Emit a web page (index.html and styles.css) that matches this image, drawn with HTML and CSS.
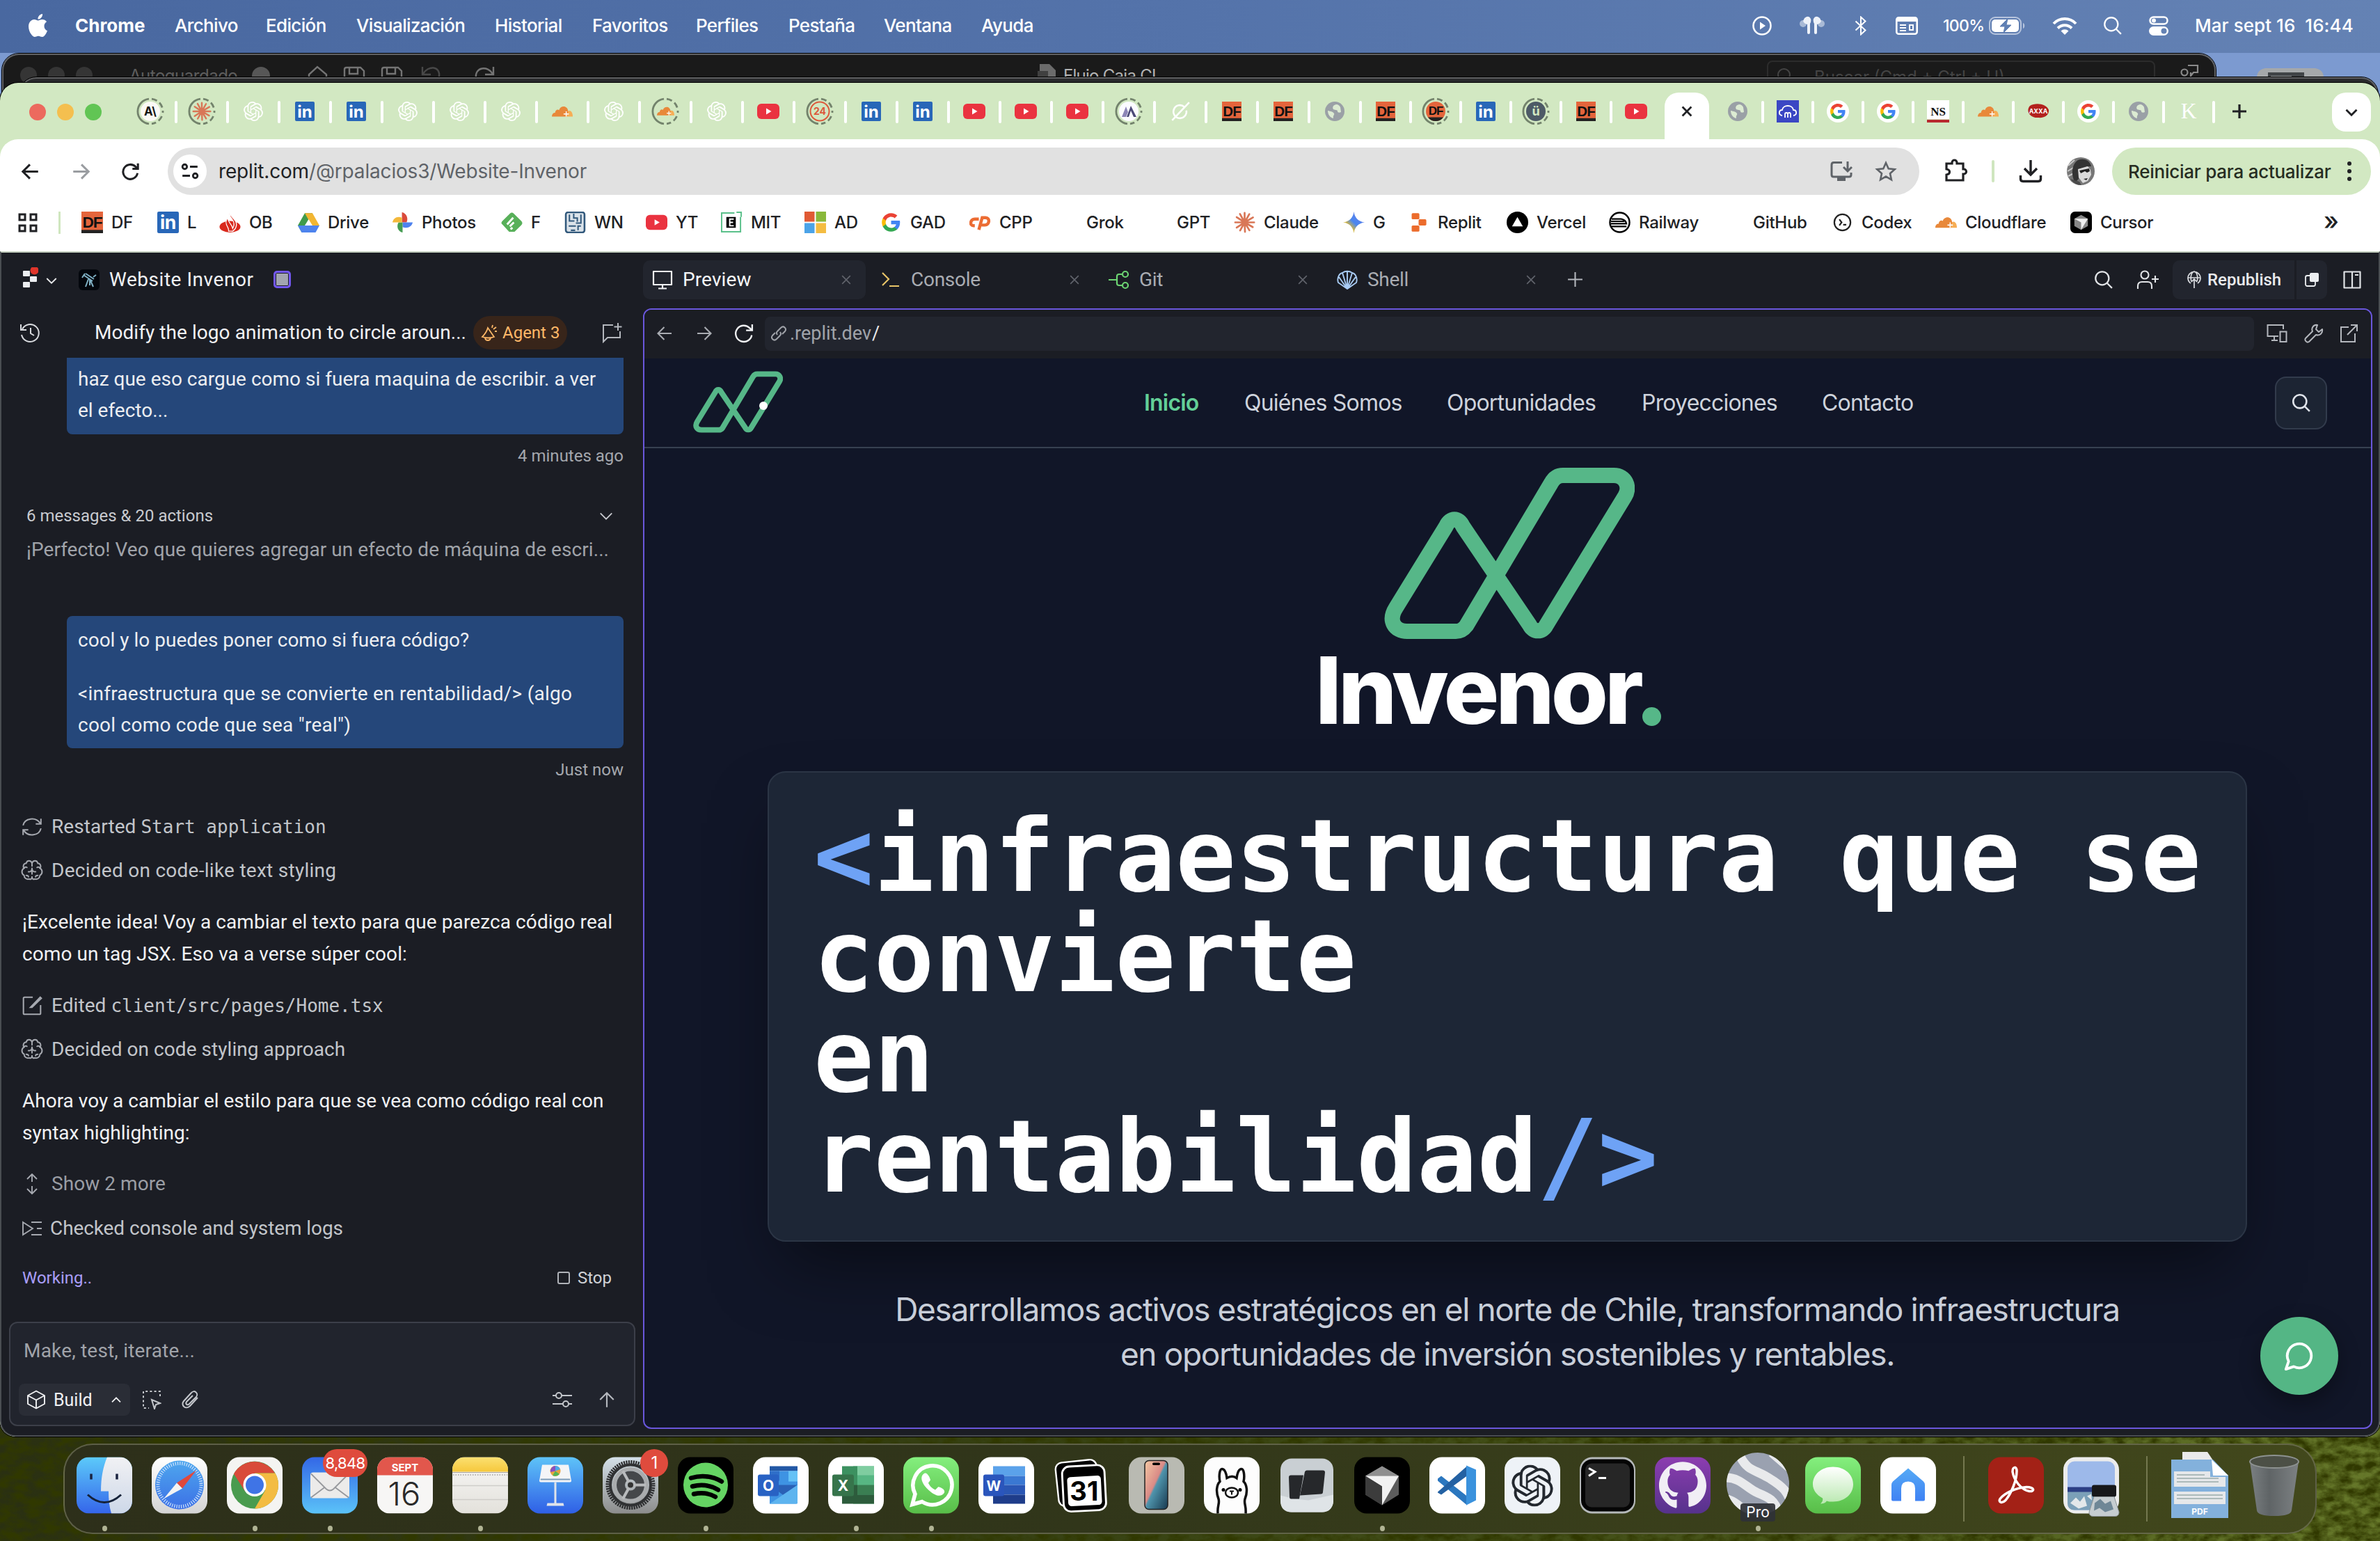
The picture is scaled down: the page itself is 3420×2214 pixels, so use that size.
FILE: index.html
```html
<!DOCTYPE html>
<html lang="es">
<head>
<meta charset="utf-8">
<title>Website Invenor - Replit</title>
<link rel="stylesheet" href="styles.css">
</head>
<body>
<svg class="defs" aria-hidden="true">
  <defs>
    <linearGradient id="gFinder" x2="0" y2="1"><stop stop-color="#5ccafa"/><stop offset="1" stop-color="#3565ea"/></linearGradient>
    <linearGradient id="gFace" x2="0" y2="1"><stop stop-color="#f1f1f4"/><stop offset="1" stop-color="#cdd8e8"/></linearGradient>
    <linearGradient id="gGray" x2="0" y2="1"><stop stop-color="#fff"/><stop offset="1" stop-color="#d4d4d4"/></linearGradient>
    <linearGradient id="gSafari" x2="0" y2="1"><stop stop-color="#4ea7ee"/><stop offset="1" stop-color="#3c70e6"/></linearGradient>
    <linearGradient id="gMail" x2="0" y2="1"><stop stop-color="#3367e6"/><stop offset="1" stop-color="#5bc3f8"/></linearGradient>
    <linearGradient id="gKey" x2="0" y2="1"><stop stop-color="#5ec3f8"/><stop offset="1" stop-color="#2f5fe6"/></linearGradient>
    <linearGradient id="gYellow" x2="0" y2="1"><stop stop-color="#fbe071"/><stop offset="1" stop-color="#f6c83c"/></linearGradient>
    <linearGradient id="gNote" x2="0" y2="1"><stop stop-color="#f8f7f6"/><stop offset="1" stop-color="#e3e1db"/></linearGradient>
    <linearGradient id="gSet" x2="0" y2="1"><stop stop-color="#d4e0e8"/><stop offset="1" stop-color="#8c8c8c"/></linearGradient>
    <linearGradient id="gGreen" x2="0" y2="1"><stop stop-color="#84ef7e"/><stop offset="1" stop-color="#58bd48"/></linearGradient>
    <linearGradient id="gBubble" x2="0" y2="1"><stop stop-color="#fff"/><stop offset="1" stop-color="#b9e8b0"/></linearGradient>
    <linearGradient id="gPurple" x2="0" y2="1"><stop stop-color="#8c3db0"/><stop offset="1" stop-color="#56328c"/></linearGradient>
    <linearGradient id="gBlue" x2="0" y2="1"><stop stop-color="#56aaf5"/><stop offset="1" stop-color="#3f82f4"/></linearGradient>
    <linearGradient id="gPhone" x2="1" y2="1"><stop stop-color="#f4c9a4"/><stop offset=".45" stop-color="#d98a86"/><stop offset=".5" stop-color="#4f94ac"/><stop offset="1" stop-color="#17384f"/></linearGradient>
    <linearGradient id="gTrash" x2="1" y2="0"><stop stop-color="#7b8082"/><stop offset=".4" stop-color="#5f6466"/><stop offset="1" stop-color="#7d8183"/></linearGradient>
    <linearGradient id="gGem" x1="0" x2="1" y1="1" y2="0"><stop stop-color="#41a55e"/><stop offset=".3" stop-color="#d9b83e"/><stop offset=".5" stop-color="#4a86ef"/><stop offset="1" stop-color="#6d7ee8"/></linearGradient>
    <clipPath id="rnd"><rect width="80" height="81" rx="18"/></clipPath>
    <clipPath id="earth"><circle cx="40" cy="39" r="45"/></clipPath>
    <filter id="grassNoise" x="0" y="0" width="100%" height="100%"><feTurbulence type="fractalNoise" baseFrequency=".05 .08" numOctaves="5" seed="11"/><feColorMatrix values="0 0 0 0 0.03  0 0 0 0 0.04  0 0 0 0 0  2.2 0 0 0 -.62"/></filter>
  </defs>
</svg>
<svg class="sprite" aria-hidden="true">
  <symbol id="apple" viewBox="0 0 24 24"><path fill="currentColor" d="M12.152 6.896c-.948 0-2.415-1.078-3.96-1.04-2.04.027-3.91 1.183-4.961 3.014-2.117 3.675-.546 9.103 1.519 12.09 1.013 1.454 2.208 3.09 3.792 3.039 1.52-.065 2.09-.987 3.935-.987 1.831 0 2.35.987 3.96.948 1.637-.026 2.676-1.48 3.676-2.948 1.156-1.688 1.636-3.325 1.662-3.415-.039-.013-3.182-1.221-3.22-4.857-.026-3.04 2.48-4.494 2.597-4.559-1.429-2.09-3.623-2.324-4.39-2.376-2-.156-3.675 1.09-4.61 1.09zM15.53 3.83c.843-1.012 1.4-2.427 1.245-3.83-1.207.052-2.662.805-3.532 1.818-.78.896-1.454 2.338-1.273 3.714 1.338.104 2.715-.688 3.559-1.701"/></symbol>
  <symbol id="gpt" viewBox="0 0 24 24"><path fill="currentColor" d="M22.2819 9.8211a5.9847 5.9847 0 0 0-.5157-4.9108 6.0462 6.0462 0 0 0-6.5098-2.9A6.0651 6.0651 0 0 0 4.9807 4.1818a5.9847 5.9847 0 0 0-3.9977 2.9 6.0462 6.0462 0 0 0 .7427 7.0966 5.98 5.98 0 0 0 .511 4.9107 6.051 6.051 0 0 0 6.5146 2.9001A5.9847 5.9847 0 0 0 13.2599 24a6.0557 6.0557 0 0 0 5.7718-4.2058 5.9894 5.9894 0 0 0 3.9977-2.9001 6.0557 6.0557 0 0 0-.7475-7.0729zm-9.022 12.6081a4.4755 4.4755 0 0 1-2.8764-1.0408l.1419-.0804 4.7783-2.7582a.7948.7948 0 0 0 .3927-.6813v-6.7369l2.02 1.1686a.071.071 0 0 1 .038.052v5.5826a4.504 4.504 0 0 1-4.4945 4.4944zm-9.6607-4.1254a4.4708 4.4708 0 0 1-.5346-3.0137l.142.0852 4.783 2.7582a.7712.7712 0 0 0 .7806 0l5.8428-3.3685v2.3324a.0804.0804 0 0 1-.0332.0615L9.74 19.9502a4.4992 4.4992 0 0 1-6.1408-1.6464zM2.3408 7.8956a4.485 4.485 0 0 1 2.3655-1.9728V11.6a.7664.7664 0 0 0 .3879.6765l5.8144 3.3543-2.0201 1.1685a.0757.0757 0 0 1-.071 0l-4.8303-2.7865A4.504 4.504 0 0 1 2.3408 7.872zm16.5963 3.8558L13.1038 8.364 15.1192 7.2a.0757.0757 0 0 1 .071 0l4.8303 2.7913a4.4944 4.4944 0 0 1-.6765 8.1042v-5.6772a.79.79 0 0 0-.407-.667zm2.0107-3.0231l-.142-.0852-4.7735-2.7818a.7759.7759 0 0 0-.7854 0L9.409 9.2297V6.8974a.0662.0662 0 0 1 .0284-.0615l4.8303-2.7866a4.4992 4.4992 0 0 1 6.6802 4.66zM8.3065 12.863l-2.02-1.1638a.0804.0804 0 0 1-.038-.0567V6.0742a4.4992 4.4992 0 0 1 7.3757-3.4537l-.142.0805L8.704 5.459a.7948.7948 0 0 0-.3927.6813zm1.0976-2.3654l2.602-1.4998 2.6069 1.4998v2.9994l-2.5974 1.4997-2.6067-1.4997Z"/></symbol>
  <symbol id="github" viewBox="0 0 24 24"><path fill="currentColor" d="M12 .297c-6.63 0-12 5.373-12 12 0 5.303 3.438 9.8 8.205 11.385.6.113.82-.258.82-.577v-3.65c-3.338.724-4.042-1.61-4.042-1.61-.56-1.4-1.35-1.77-1.35-1.77-1.087-.744.084-.729.084-.729 1.205.084 1.838 1.236 1.838 1.236 1.07 1.835 2.809 1.305 3.495.998.108-.776.417-1.305.76-1.605-2.665-.3-5.466-1.332-5.466-5.93 0-1.31.465-2.38 1.235-3.22-.135-.303-.54-1.523.105-3.176 0 0 1.005-.322 3.3 1.23.96-.267 1.98-.399 3-.405 1.02.006 2.04.138 3 .405 2.28-1.552 3.285-1.23 3.285-1.23.645 1.653.24 2.873.12 3.176.765.84 1.23 1.91 1.23 3.22 0 4.61-2.805 5.625-5.475 5.92.42.36.81 1.096.81 2.22v4.3c0 .315.21.69.825.57C20.565 22.092 24 17.592 24 12.297c0-6.627-5.373-12-12-12"/></symbol>
  <symbol id="google" viewBox="0 0 24 24"><path fill="#4285F4" d="M22.56 12.25c0-.78-.07-1.53-.2-2.25H12v4.26h5.92c-.26 1.37-1.04 2.53-2.21 3.31v2.77h3.57c2.08-1.92 3.28-4.74 3.28-8.09z"/><path fill="#34A853" d="M12 23c2.97 0 5.46-.98 7.28-2.66l-3.57-2.77c-.98.66-2.23 1.06-3.71 1.06-2.86 0-5.29-1.93-6.16-4.53H2.18v2.84C3.99 20.53 7.7 23 12 23z"/><path fill="#FBBC05" d="M5.84 14.09c-.22-.66-.35-1.36-.35-2.09s.13-1.43.35-2.09V7.07H2.18C1.43 8.55 1 10.22 1 12s.43 3.45 1.18 4.93l3.66-2.84z"/><path fill="#EA4335" d="M12 5.38c1.62 0 3.06.56 4.21 1.64l3.15-3.15C17.45 2.09 14.97 1 12 1 7.7 1 3.99 3.47 2.18 7.07l3.66 2.84c.87-2.6 3.3-4.53 6.16-4.53z"/></symbol>
  <symbol id="googleDot" viewBox="0 0 32 32"><circle cx="16" cy="16" r="16" fill="#fff"/><use href="#google" x="4" y="4" width="24" height="24"/></symbol>
  <symbol id="claude" viewBox="0 0 24 24"><g stroke="#d97757" stroke-width="2.1" stroke-linecap="round"><path d="M12 12V1.500M12 12l5.200-9.200M12 12l9.300-5.500M12 12h10.600M12 12l9 5.200M12 12l5.300 8.800M12 12l.4 10.500M12 12l-5 9M12 12l-8.800 5.800M12 12H1.500M12 12L3.200 6.200M12 12L6.800 2.600"/></g></symbol>
  <symbol id="claudeDash" viewBox="0 0 40 40"><use href="#ring"/><use href="#claude" x="6" y="6" width="28" height="28"/></symbol>
  <symbol id="ring" viewBox="0 0 40 40"><path d="M18 37.9A18 18 0 0 1 18 2.1" fill="none" stroke="#73836c" stroke-width="2.8"/><path d="M22 2.1A18 18 0 0 1 37.9 22M36.5 27A18 18 0 0 1 22 37.9" fill="none" stroke="#73836c" stroke-width="2.8" stroke-dasharray="8 4.5"/></symbol>
  <symbol id="anthropic" viewBox="0 0 40 40"><use href="#ring"/><circle cx="20" cy="20" r="14" fill="#faf9f5"/><text x="20" y="26" text-anchor="middle" class="t-bold" font-size="17" fill="#141413">A\</text></symbol>
  <symbol id="in" viewBox="0 0 28 28"><rect width="28" height="28" rx="2" fill="#2867b8"/><text x="14" y="23" text-anchor="middle" class="t-bold" font-size="24" fill="#fff">in</text></symbol>
  <symbol id="cloud" viewBox="0 0 32 24"><path fill="#f6ad55" d="M22 20c0-5 2-9 5-9 3 0 5 4 5 9z"/><path fill="#e8883a" d="M0 20c0-4 2-6 5-6 0-4 4-6 6-4 2-7 13-8 14 2l-2 8z"/><path stroke="#fff" stroke-width="1.600" d="M22 12v8M18 16h8"/></symbol>
  <symbol id="cloudDash" viewBox="0 0 40 40"><use href="#ring"/><use href="#cloud" x="8" y="10" width="25" height="19"/></symbol>
  <symbol id="yt" viewBox="0 0 32 24"><rect y="1" width="32" height="22" rx="6" fill="#ea3340"/><path fill="#fff" d="M13 7.500v9l7.500-4.500z"/></symbol>
  <symbol id="n24" viewBox="0 0 40 40"><use href="#ring"/><circle cx="20" cy="20" r="13.500" fill="none" stroke="#dc5a3c" stroke-width="2"/><text x="20" y="25" text-anchor="middle" class="t-bold" font-size="14" fill="#dc5a3c">24</text></symbol>
  <symbol id="mount" viewBox="0 0 40 40"><use href="#ring"/><circle cx="20" cy="20" r="14" fill="#fbfbff"/><path d="M10 28l6-15 3 8-3 7z" fill="#8d86b8"/><path d="M17 28l6-16 8 16h-4l-4-9-3 9z" fill="#4c4a78"/></symbol>
  <symbol id="grok" viewBox="0 0 24 24"><path d="M17 6.500a8 8 0 1 0 2.500 4.500M2 23L23 1" fill="none" stroke="#fff" stroke-width="2.200"/></symbol>
  <symbol id="df" viewBox="0 0 30 30"><rect width="30" height="30" fill="#e4653c"/><rect y="25.500" width="30" height="4.500" fill="#222"/><text x="15" y="22.500" text-anchor="middle" class="t-df" font-size="22" fill="#111">DF</text></symbol>
  <symbol id="dfDash" viewBox="0 0 40 40"><use href="#ring"/><circle cx="20" cy="20" r="14" fill="#e4653c"/><text x="20" y="25" text-anchor="middle" class="t-df" font-size="17" fill="#111">DF</text><path d="M9 28.500h22q-4 5.500-11 5.500T9 28.500z" fill="#222"/></symbol>
  <symbol id="globe" viewBox="0 0 28 28"><circle cx="14" cy="14" r="14" fill="#9aa0a6"/><path fill="#dcebd2" d="M16 4c-4 1-6 4-4 7 2 2 6 0 6 3 0 2 3 2 5 1l-1-7c-1-2-3-4-6-4zM4 13c4 1 7 1 9 4 1 2-2 3-1 7-5-1-8-6-8-11z"/></symbol>
  <symbol id="uDash" viewBox="0 0 40 40"><use href="#ring"/><circle cx="20" cy="20" r="14" fill="#4d5a66"/><text x="20" y="26" text-anchor="middle" class="t-bold" font-size="18" fill="#d2e8c2">ü</text></symbol>
  <symbol id="pod" viewBox="0 0 32 32"><rect width="32" height="32" fill="#3b47c4"/><path d="M8 22c-6-1-5-8 0-8 1-8 15-8 16 0 5 0 6 7 0 8M12 25v-5q0-2 2-2t2 2v5M16 20q0-2 2-2t2 2v5" fill="none" stroke="#fff" stroke-width="1.800"/></symbol>
  <symbol id="ns" viewBox="0 0 32 32"><rect width="32" height="27" fill="#fff"/><rect y="28" width="32" height="4" fill="#b8292f"/><text x="16" y="22" text-anchor="middle" class="t-serif" font-size="17" fill="#111">NS</text></symbol>
  <symbol id="axxa" viewBox="0 0 32 24"><path fill="#b3211e" d="M4 4c8-5 24-3 27 6 1 8-8 12-15 11C5 22-3 12 4 4z"/><text x="16" y="15" text-anchor="middle" class="t-bold" font-size="9" fill="#fff">AXXA</text></symbol>
  <symbol id="kk" viewBox="0 0 28 32"><text x="14" y="27" text-anchor="middle" class="t-serif-r" font-size="36" fill="#fff">K</text></symbol>
  <symbol id="x" viewBox="0 0 24 24"><path d="M5 5l14 14M19 5L5 19" fill="none" stroke="currentColor" stroke-width="var(--w,2)"/></symbol>
  <symbol id="plus" viewBox="0 0 24 24"><path d="M12 2v20M2 12h20" fill="none" stroke="currentColor" stroke-width="var(--w,2)"/></symbol>
  <symbol id="back" viewBox="0 0 24 24"><path d="M22 12H3M11.500 3L2.500 12l9 9" fill="none" stroke="currentColor" stroke-width="var(--w,2)"/></symbol>
  <symbol id="fwd" viewBox="0 0 24 24"><path d="M2 12h19M12.500 3l9 9-9 9" fill="none" stroke="currentColor" stroke-width="var(--w,2)"/></symbol>
  <symbol id="up" viewBox="0 0 24 24"><path d="M12 22V3M3 12l9-9 9 9" fill="none" stroke="currentColor" stroke-width="var(--w,2)"/></symbol>
  <symbol id="reload" viewBox="0 0 24 24"><path d="M21 14a9.300 9.300 0 1 1-2.500-8.200L21.500 8.500M21.500 1.500v7h-7" fill="none" stroke="currentColor" stroke-width="var(--w,2)"/></symbol>
  <symbol id="down" viewBox="0 0 24 24"><path d="M3 8l9 9 9-9" fill="none" stroke="currentColor" stroke-width="var(--w,2)"/></symbol>
  <symbol id="upc" viewBox="0 0 24 24"><path d="M3 17l9-9 9 9" fill="none" stroke="currentColor" stroke-width="var(--w,2)"/></symbol>
  <symbol id="search" viewBox="0 0 24 24"><circle cx="10.500" cy="10.500" r="8.500" fill="none" stroke="currentColor" stroke-width="var(--w,2)"/><path d="M16.500 16.500L23 23" stroke="currentColor" stroke-width="var(--w,2)"/></symbol>
  <symbol id="brain" viewBox="0 0 30 30"><path d="M15 5C14 1 8 0 7 5 3 5 2 10 4 12c-4 2-4 8 0 10 0 4 4 6 7 5 2 1 4 0 4-3M15 5c1-4 7-5 8 0 4 0 5 5 3 7 4 2 4 8 0 10 0 4-4 6-7 5-2 1-4 0-4-3M15 5v4M15 12v8M10 17c3 0 5-2 5-5 0 3 2 5 5 5M4 12c1-2 3-2 4-1M26 12c-1-2-3-2-4-1M7 22c2 0 3 1 3 2M23 22c-2 0-3 1-3 2" fill="none" stroke="currentColor" stroke-width="1.900" stroke-linecap="round"/></symbol>
  <symbol id="mark" viewBox="0 0 360 246"><path fill="none" stroke="#56b788" stroke-width="22" stroke-linejoin="round" d="M33 235H103Q112 235 118 227L240 22Q246 11 257 11H330C347 11 354 28 346 41L233 226C228 237 214 237 209 226L113 84C107 71 95 71 89 84L17 201C5 220 15 235 33 235Z"/></symbol>
</svg>

<svg class="grass" width="3420" height="200"><rect width="3420" height="200" filter="url(#grassNoise)"/></svg>

<header class="menubar">
  <svg class="m-apple"><use href="#apple"/></svg>
  <nav class="menus"><b>Chrome</b><span>Archivo</span><span>Edición</span><span>Visualización</span><span>Historial</span><span>Favoritos</span><span>Perfiles</span><span>Pestaña</span><span>Ventana</span><span>Ayuda</span></nav>
  <div class="status">
    <svg viewBox="0 0 28 28" width="28" height="28"><circle cx="14" cy="14" r="12.500" fill="none" stroke="#fff" stroke-width="2.500"/><path fill="#fff" d="M11 8.500v11l8-5.500z"/></svg>
    <svg viewBox="0 0 38 28" width="38" height="28"><circle cx="6" cy="11" r="5" fill="#a9bad6"/><circle cx="32" cy="11" r="5" fill="#a9bad6"/><path fill="#eef2f9" d="M8 3q6-5 9 1 1 4-1 7v13q0 2-2 2t-2-2V12Q7 11 6 7zM30 3q-6-5-9 1-1 4 1 7v13q0 2 2 2t2-2V12q5-1 6-5z"/></svg>
    <svg viewBox="0 0 18 28" width="18" height="28"><path d="M1.500 7.500l14 13L9 26.500v-25l6.500 6L1.500 20.500" fill="none" stroke="#fff" stroke-width="2"/></svg>
    <svg viewBox="0 0 32 26" width="32" height="26"><rect x="1.300" y="1.300" width="29.400" height="23.400" rx="3" fill="none" stroke="#fff" stroke-width="2.600"/><path fill="#fff" d="M2 2h28v5H2z"/><path stroke="#fff" stroke-width="2" d="M6 12h9M6 16h9M6 20h9M20 12h5v7h-5z" fill="none"/></svg>
    <span class="pct">100%</span>
    <svg viewBox="0 0 52 26" width="52" height="26"><rect x="1" y="1" width="45" height="24" rx="8" fill="none" stroke="#b6c4dd" stroke-width="2"/><rect x="4" y="4" width="39" height="18" rx="5" fill="#fff"/><path d="M49 9c3 1 3 7 0 8z" fill="#b6c4dd"/><path fill="#5f7fb3" stroke="#5f7fb3" d="M27 3L16 14h7l-2 9 11-11h-7z"/></svg>
    <svg viewBox="0 0 36 26" width="36" height="26"><path fill="none" stroke="#fff" stroke-width="4" d="M2 10a22 22 0 0 1 32 0M8 16.500a14 14 0 0 1 20 0"/><path fill="#fff" d="M12.500 20.500a8 8 0 0 1 11 0L18 26z"/></svg>
    <svg class="s26"><use href="#search"/></svg>
    <svg viewBox="0 0 28 28" width="28" height="28"><rect x="1.500" y="1.500" width="25" height="10" rx="5" fill="none" stroke="#fff" stroke-width="2.500"/><circle cx="7" cy="6.500" r="3" fill="#fff"/><rect y="15" width="28" height="13" rx="6.500" fill="#fff"/><circle cx="21.500" cy="21.500" r="4" fill="#6482b4"/></svg>
    <span class="clock">Mar sept 16&nbsp; 16:44</span>
  </div>
</header>

<svg class="drive" viewBox="0 0 96 40" width="96" height="40"><path fill="#a5a8aa" d="M0 40V14Q0 2 12 0h72q12 2 12 14v26z"/><path fill="#404447" d="M16 6h52v34H16z"/><path stroke="#9b9fa1" stroke-width="2" d="M20 12h30M20 17h24M20 22h28M54 30l4-12 5 12"/></svg>

<section class="win excel">
  <div class="xlights"><i></i><i></i><i></i></div>
  <span class="xauto">Autoguardado</span><i class="xtoggle"></i>
  <svg class="xicons" viewBox="0 0 330 40" width="330" height="40"><g fill="none" stroke="#747474" stroke-width="2.400"><path d="M3 34V15L15 4l13 11v19"/><path d="M54 34V8q0-3 3-3h20l5 5v24M61 5v9h12V5M60 34V21h16v13M108 34V8q0-3 3-3h20l5 5v24M115 5v9h12V5M114 34V21h14"/><path stroke="#484848" d="M166 4v11h12M167 14c7-12 25-12 23 4q-2 4-7 9"/><path d="M209 22l5 5 5-5M268 4v11h-12M267 14c-7-12-26-10-24 6"/></g><g fill="#747474"><circle cx="303" cy="24" r="2.500"/><circle cx="313" cy="24" r="2.500"/><circle cx="323" cy="24" r="2.500"/></g></svg>
  <div class="xtitle"><svg viewBox="0 0 26 34" width="26" height="34"><path fill="#6b6b6b" d="M3 0h14l9 9v25H3z"/><path fill="#404040" d="M0 10h15v14H0z"/></svg><span>Flujo Caja CL</span></div>
  <div class="xsearch"><svg class="s22"><use href="#search"/></svg>Buscar (Cmd + Ctrl + U)</div>
  <svg class="xshare" viewBox="0 0 28 28" width="28" height="28"><g fill="none" stroke="#8a8a8a" stroke-width="2.200"><circle cx="7" cy="12" r="4.500"/><path d="M12 2h14v10h-6l-4 5v-5M1 24c0-7 12-7 12 0"/></g></svg>
</section>
<section class="win shadowwin"></section>

<section class="win chrome">
  <div class="tabstrip">
    <div class="lights"><i class="r"></i><i class="y"></i><i class="g"></i></div>
    <div class="tabs">
      <span><svg class="d"><use href="#anthropic"/></svg></span><span><svg class="d"><use href="#claudeDash"/></svg></span><span><svg class="w"><use href="#gpt"/></svg></span><span><svg><use href="#in"/></svg></span><span><svg><use href="#in"/></svg></span><span><svg class="w"><use href="#gpt"/></svg></span><span><svg class="w"><use href="#gpt"/></svg></span><span><svg class="w"><use href="#gpt"/></svg></span><span><svg><use href="#cloud"/></svg></span><span><svg class="w"><use href="#gpt"/></svg></span><span><svg class="d"><use href="#cloudDash"/></svg></span><span><svg class="w"><use href="#gpt"/></svg></span><span><svg class="b"><use href="#yt"/></svg></span><span><svg class="d"><use href="#n24"/></svg></span><span><svg><use href="#in"/></svg></span><span><svg><use href="#in"/></svg></span><span><svg class="b"><use href="#yt"/></svg></span><span><svg class="b"><use href="#yt"/></svg></span><span><svg class="b"><use href="#yt"/></svg></span><span><svg class="d"><use href="#mount"/></svg></span><span><svg><use href="#grok"/></svg></span><span><svg><use href="#df"/></svg></span><span><svg><use href="#df"/></svg></span><span><svg><use href="#globe"/></svg></span><span class="n"><svg><use href="#df"/></svg></span><span class="n"><svg class="d"><use href="#dfDash"/></svg></span><span class="n"><svg><use href="#in"/></svg></span><span class="n"><svg class="d"><use href="#uDash"/></svg></span><span class="n"><svg><use href="#df"/></svg></span><span class="n last"><svg class="b"><use href="#yt"/></svg></span>
      <span class="active"><svg><use href="#x"/></svg></span>
      <span class="n"><svg><use href="#globe"/></svg></span><span class="n"><svg class="b"><use href="#pod"/></svg></span><span class="n"><svg class="b"><use href="#googleDot"/></svg></span><span class="n"><svg class="b"><use href="#googleDot"/></svg></span><span class="n"><svg class="b"><use href="#ns"/></svg></span><span class="n"><svg><use href="#cloud"/></svg></span><span class="n"><svg class="b"><use href="#axxa"/></svg></span><span class="n"><svg class="b"><use href="#googleDot"/></svg></span><span class="n"><svg><use href="#globe"/></svg></span><span class="n"><svg><use href="#kk"/></svg></span>
      <span class="newtab"><svg><use href="#plus"/></svg></span>
    </div>
    <div class="tabmenu"><svg><use href="#down"/></svg></div>
  </div>

  <div class="toolbar">
    <div class="navbtns"><svg><use href="#back"/></svg><svg class="off"><use href="#fwd"/></svg><svg><use href="#reload"/></svg></div>
    <div class="omni">
      <span class="site"><svg viewBox="0 0 24 24" width="26" height="26"><g fill="none" stroke="#202124" stroke-width="2.600"><circle cx="5" cy="6" r="3"/><circle cx="19" cy="18" r="3"/><path d="M12 6h10M2 18h10"/></g></svg></span>
      <span class="url"><b>replit.com</b>/@rpalacios3/Website-Invenor</span>
      <svg viewBox="0 0 32 30" width="32" height="30"><path fill="none" stroke="#5f6368" stroke-width="3" d="M17 2.500H5Q2 2.500 2 6v14q0 3 3 3h22q3 0 3-3v-3M25 1v13M19 9l6 6 6-6"/><path fill="#5f6368" d="M10 23h12v6H10z"/></svg>
      <svg viewBox="0 0 32 30" width="32" height="30"><path fill="none" stroke="#5f6368" stroke-width="2.600" d="M16 3l3.700 8.300 9 .9-6.700 6.100 1.900 8.900L16 22.600l-7.900 4.600L10 18.300l-6.700-6.100 9-.9z"/></svg>
    </div>
    <svg class="puz" viewBox="0 0 34 34" width="34" height="34"><path fill="none" stroke="#202124" stroke-width="3.200" d="M3 8h8V6.500a3.500 3.500 0 0 1 7 0V8h9v8h1a3.500 3.500 0 0 1 0 7h-1v9H3v-8c6-1 6-7 0-8z"/></svg>
    <i class="tsep"></i>
    <svg class="dl" viewBox="0 0 34 34" width="34" height="34"><path fill="none" stroke="#202124" stroke-width="3.400" d="M17 1v21M8 13l9 9 9-9M2.500 23v5q0 3.500 3.500 3.500h22q3.500 0 3.500-3.500v-5"/></svg>
    <svg class="ava" viewBox="0 0 40 40" width="40" height="40"><circle cx="20" cy="20" r="20" fill="#777"/><path fill="#bdbdbd" d="M2 12l9-8M1 20l10-6M2 27l8-4" stroke="#c8c8c8" stroke-width="2"/><path fill="#333" d="M12 36C6 28 6 10 16 4c10-4 18 2 19 9l-6 0-12 4v14z"/><path fill="#dadada" d="M16 17l14-4 4 5 1 7-5 9-7 3-6-8z"/><path fill="#222" d="M18 19l14-3 1 4-4 2-3-2-6 3zM24 31l6-1-2 3z"/><path fill="#4a4a4a" d="M5 31l13 4 3 5q-10 0-16-9z"/></svg>
    <div class="restart">Reiniciar para actualizar<span class="kebab"><i></i><i></i><i></i></span></div>
  </div>

  <div class="bookmarks">
    <span class="apps"><svg viewBox="0 0 28 28" width="28" height="28"><path fill="none" stroke="#202124" stroke-width="3" d="M2 2h8v8H2zM18 2h8v8h-8zM2 18h8v8H2zM18 18h8v8h-8z"/></svg><i></i></span>
    <span><svg><use href="#df"/></svg>DF</span>
    <span><svg><use href="#in"/></svg>L</span>
    <span><svg viewBox="0 0 32 32"><ellipse cx="16" cy="22.500" rx="15.500" ry="8.500" fill="#d9291c"/><path fill="#d9291c" stroke="#fff" stroke-width="1.400" d="M16 0c-2 5 0 8 3 11 3 4 4 9 1 14-1-7-8-9-7-16-5 5-3 10 0 15 1 2 1 3 1 5h6c7-5 7-13 2-18-4-4-6-6-6-11z"/></svg>OB</span>
    <span><svg viewBox="0 0 28 28"><path fill="#3f9a4c" d="M9 2h10L5 27 0 18z"/><path fill="#f2b632" d="M19 2l9 16H18L9 2z"/><path fill="#4d83ee" d="M0 18h28l-5 9H5z"/><path fill="#fff" d="M14 10l5 8H9z"/></svg>Drive</span>
    <span><svg viewBox="0 0 32 32"><path fill="#da4b3b" d="M15 1v15h7c3-7-1-14-7-15z"/><path fill="#4e82ee" d="M31 16H16v7c7 3 14-1 15-7z"/><path fill="#459c52" d="M16 31V16H10c-4 7 0 14 6 15z"/><path fill="#f3b83a" d="M1 16h14V9C8 6 2 10 1 16z"/></svg>Photos</span>
    <span><svg viewBox="0 0 32 30"><path fill="#58b05a" d="M13 2q3-3 6 0l11 11q3 3 0 6L20 29h-8L2 18q-3-2 0-5z"/><path stroke="#fff" stroke-width="3" d="M9 18L18 8M13 21l6-6M14 25l3-2"/></svg>F</span>
    <span><svg viewBox="0 0 28 30"><rect x="1" y="1" width="26" height="28" rx="3" fill="#dbe3ea" stroke="#32597c" stroke-width="2.500"/><path d="M6 4v9h7M12 3v6h5v5M22 4v12h-7M5 20h10M22 20h-4v6M8 26h6" fill="none" stroke="#32597c" stroke-width="2"/></svg>WN</span>
    <span><svg><use href="#yt"/></svg>YT</span>
    <span><svg viewBox="0 0 32 32"><path fill="#fff" stroke="#5ac08a" stroke-width="2" d="M20 2H1v28h28V8"/><path d="M23 1h7v7" fill="none" stroke="#5ac08a" stroke-width="2"/><path d="M8 8h14v16H8z" fill="#000"/><path d="M19 11h-6v10h6M13 16h5" stroke="#fff" stroke-width="2" fill="none"/></svg>MIT</span>
    <span><svg viewBox="0 0 32 32"><path fill="#e05a34" d="M0 0h15v15H0z"/><path fill="#89b83a" d="M17 0h15v15H17z"/><path fill="#4ba3e8" d="M0 17h15v15H0z"/><path fill="#f4bc41" d="M17 17h15v15H17z"/></svg>AD</span>
    <span><svg class="gg"><use href="#google"/></svg>GAD</span>
    <span><svg viewBox="0 0 32 24"><path fill="none" stroke="#ec6c33" stroke-width="4.600" d="M14 7H8c-7 0-8 10-2 10h2M14 23l5-18h5c7 0 6 11-1 11h-5"/></svg>CPP</span>
    <span><svg></svg>Grok</span>
    <span><svg></svg>GPT</span>
    <span><svg><use href="#claude"/></svg>Claude</span>
    <span><svg viewBox="0 0 28 28"><path fill="url(#gGem)" d="M14 0c1 8 6 13 14 14-8 1-13 6-14 14C13 20 8 15 0 14 8 13 13 8 14 0z"/></svg>G</span>
    <span><svg viewBox="0 0 28 28"><g fill="#ec6c2c"><rect x="5" y="2" width="10" height="8" rx="1.500"/><rect x="14" y="10" width="10" height="8" rx="1.500"/><rect x="5" y="18" width="10" height="8" rx="1.500"/></g></svg>Replit</span>
    <span><svg viewBox="0 0 32 32"><circle cx="16" cy="16" r="16"/><path fill="#fff" d="M16 8l8 14H8z"/></svg>Vercel</span>
    <span><svg viewBox="0 0 32 32"><circle cx="16" cy="16" r="14.500" fill="none" stroke="#000" stroke-width="2.500"/><path stroke="#000" stroke-width="2.200" fill="none" d="M4 11h14q7 1 8 7H3M3 14.500h20M4 22h22"/></svg>Railway</span>
    <span><svg></svg>GitHub</span>
    <span><svg viewBox="0 0 28 28"><circle cx="14" cy="14" r="10.500" fill="none" stroke="#222" stroke-width="2"/><path d="M10 10l3 4-3 4M15 17h4" fill="none" stroke="#222" stroke-width="2"/></svg>Codex</span>
    <span><svg><use href="#cloud"/></svg>Cloudflare</span>
    <span><svg viewBox="0 0 32 32"><rect width="32" height="32" rx="7"/><path fill="#888" d="M16 5l10 5.500v11L16 27 6 21.500v-11z"/><path fill="#eee" d="M6 10.500h20L16 27V16z"/></svg>Cursor</span>
    <span class="more">»</span>
  </div>

  <div class="replit">
    <aside class="side">
      <div class="top">
        <svg class="rlogo" viewBox="0 0 22 30" width="22" height="30"><g fill="#eceef1"><rect x="0" y="5" width="10" height="8" rx="1"/><rect x="10" y="13" width="10" height="8" rx="1"/><rect x="0" y="21" width="10" height="8" rx="1"/></g><circle cx="16.500" cy="4.500" r="6" fill="#e0352b"/></svg>
        <svg class="chev"><use href="#down"/></svg>
        <svg class="rapp" viewBox="0 0 30 30" width="30" height="30"><rect width="30" height="30" rx="6" fill="#04070d"/><path d="M7 8l13 9M10 6l12 8M14 14l-4 11M16 14l5 11M16 15v8M5 12l4-6M21 11l4-3" stroke="#7fb0c4" stroke-width="2" fill="none"/></svg>
        <b>Website Invenor</b><i class="chip"></i>
      </div>
      <div class="thread">
        <svg class="hist" viewBox="0 0 30 30" width="30" height="30"><g fill="none" stroke="#d8dade" stroke-width="2"><path d="M4 10a12.500 12.500 0 1 1-1 8M2 3v8h8M16 8v8l5 3"/></g></svg>
        <span class="title">Modify the logo animation to circle aroun...</span>
        <span class="agent"><svg viewBox="0 0 26 26" width="26" height="26"><path d="M3 19q6-6 8-13l9 13q-8 3-17 0zM7 21c1 4 7 4 8 0M18 2l-1 4M23 5l-4 3M24 11l-3 0" fill="none" stroke="#ffb868" stroke-width="1.800"/></svg>Agent 3</span>
        <svg class="newchat" viewBox="0 0 30 30" width="30" height="30"><path d="M16 4H2v24l6-6h18v-9M23 1v11M17.500 6.500h11" fill="none" stroke="#b4b7bd" stroke-width="2"/></svg>
      </div>
      <div class="msg first"><p>haz que eso cargue como si fuera maquina de escribir. a ver<br>el efecto...</p></div>
      <div class="time">4 minutes ago</div>
      <div class="sum"><span>6 messages &amp; 20 actions</span><svg><use href="#down"/></svg></div>
      <div class="sumtext">¡Perfecto! Veo que quieres agregar un efecto de máquina de escri...</div>
      <div class="msg second"><p>cool y lo puedes poner como si fuera código?</p><p class="wide">&lt;infraestructura que se convierte en rentabilidad/&gt; (algo<br>cool como code que sea "real")</p></div>
      <div class="time">Just now</div>
      <div class="act a1"><svg viewBox="0 0 30 26" width="32" height="28"><path d="M3 11C5 1 20-1 26 8M27 2v7h-7M27 15C25 25 10 27 4 18M3 24v-7h7" fill="none" stroke="currentColor" stroke-width="1.900"/></svg><span>Restarted <code>Start application</code></span></div>
      <div class="act a2 wide"><svg><use href="#brain"/></svg><span>Decided on code-like text styling</span></div>
      <p class="say">¡Excelente idea! Voy a cambiar el texto para que parezca código real<br>como un tag JSX. Eso va a verse súper cool:</p>
      <div class="act a3"><svg viewBox="0 0 28 28" width="30" height="30"><path d="M15 2.500H4q-1.500 0-1.500 1.500v20q0 1.500 1.500 1.500h20q1.500 0 1.500-1.500V13M12 16L25 2.500l1.500 1.500L14 16z" fill="none" stroke="currentColor" stroke-width="1.900"/></svg><span>Edited <code>client/src/pages/Home.tsx</code></span></div>
      <div class="act a2"><svg><use href="#brain"/></svg><span>Decided on code styling approach</span></div>
      <p class="say tight">Ahora voy a cambiar el estilo para que se vea como código real con<br>syntax highlighting:</p>
      <div class="act dim a4"><svg viewBox="0 0 30 30" width="30" height="30"><path d="M15 1v11M8 8l7-7 7 7M15 18v11M8 22l7 7 7-7" fill="none" stroke="currentColor" stroke-width="1.900"/></svg><span>Show 2 more</span></div>
      <div class="act a5"><svg viewBox="0 0 30 24" width="30" height="24"><path d="M2 3l14 9-14 9zM14 3h15M22 12h7M14 21h15" fill="none" stroke="currentColor" stroke-width="1.900"/></svg><span>Checked console and system logs</span></div>
      <div class="work"><span>Working..</span><span class="stop"><i></i>Stop</span></div>
      <div class="prompt">
        <span class="ph">Make, test, iterate...</span>
        <div class="ptools">
          <span class="build"><svg viewBox="0 0 28 28" width="28" height="28"><path d="M14 1.500l12 6.500v12L14 26.500 2 20V8zM2 8l12 6.500L26 8M14 14.500v12" fill="none" stroke="#f0f1f3" stroke-width="1.900" stroke-linejoin="round"/></svg>Build<svg class="bc"><use href="#upc"/></svg></span>
          <svg viewBox="0 0 28 28" width="28" height="28"><path d="M26 9V2H2v24h8" fill="none" stroke="#c4c7cc" stroke-width="2" stroke-dasharray="3 3.200"/><path d="M14 14l12 5-6 2-2 6z" fill="none" stroke="#c4c7cc" stroke-width="2"/></svg>
          <svg class="clip" viewBox="0 0 28 28" width="28" height="28"><path d="M24 11L13 23c-6 6-14-1-9-7L15 4c4-5 11 1 7 6L12 20c-3 3-6 0-4-3l9-9" fill="none" stroke="#c4c7cc" stroke-width="2"/></svg>
          <i class="grow"></i>
          <svg viewBox="0 0 28 24" width="28" height="24"><g fill="none" stroke="#c4c7cc" stroke-width="2"><circle cx="9" cy="6" r="4"/><circle cx="19" cy="18" r="4"/><path d="M0 6h5M13 6h15M0 18h15M23 18h5"/></g></svg>
          <svg class="send"><use href="#up"/></svg>
        </div>
      </div>
    </aside>

    <main class="main">
      <div class="rtabs">
        <span class="rt on"><svg viewBox="0 0 30 28" width="30" height="28"><path d="M2 2h26v19H2zM15 21v6M9 26.500h12" fill="none" stroke="#f0f1f3" stroke-width="2.200" stroke-linejoin="round"/></svg>Preview<svg class="cx"><use href="#x"/></svg></span>
        <span class="rt"><svg viewBox="0 0 30 28" width="30" height="28"><path d="M3 4l9 9-9 9M13 23h14" fill="none" stroke="#e8c468" stroke-width="2.200"/></svg>Console<svg class="cx"><use href="#x"/></svg></span>
        <span class="rt"><svg viewBox="0 0 30 28" width="30" height="28"><g fill="none" stroke="#6cd472" stroke-width="2.200"><path d="M0 14h12M19 6h-4q-3 0-3 3v10q0 3 3 3h4"/><circle cx="24" cy="6" r="4"/><circle cx="24" cy="22" r="4"/></g></svg>Git<svg class="cx"><use href="#x"/></svg></span>
        <span class="rt"><svg viewBox="0 0 30 28" width="30" height="28"><path d="M15 27L2 18C0 12 3 5 8 4c4-3 10-3 14 0 5 1 8 8 6 14zM15 27L8 4M15 27V2M15 27l7-23M15 27L3 10M15 27L27 10" fill="none" stroke="#a9ccf5" stroke-width="1.900"/></svg>Shell<svg class="cx"><use href="#x"/></svg></span>
        <svg class="radd"><use href="#plus"/></svg>
        <i class="grow"></i>
        <svg class="rs"><use href="#search"/></svg>
        <svg class="inv" viewBox="0 0 32 28" width="32" height="28"><g fill="none" stroke="#e2e4e7" stroke-width="2.100"><circle cx="12" cy="7" r="5.500"/><path d="M2 27v-4q0-6 6-6h8q6 0 6 6v4M27 8v10M22 13h10"/></g></svg>
        <span class="repub"><svg viewBox="0 0 20 26" width="20" height="26"><g fill="none" stroke="#d9dbdf" stroke-width="1.700"><path d="M5 18a9 9 0 1 1 10 0M1 10h18M6 15c-2-6 0-13 4-14 4 1 6 8 4 14M10 25V12M6 16l4-4 4 4"/></g></svg>Republish</span>
        <span class="copy"><svg viewBox="0 0 20 20" width="20" height="20"><rect x="1" y="4" width="14" height="15" rx="2.500" fill="none" stroke="#eceef1" stroke-width="1.800"/><rect x="7" y="0" width="13" height="13" rx="2" fill="#eceef1"/></svg></span>
        <svg class="lay" viewBox="0 0 26 26" width="26" height="26"><path d="M1.500 1.500h23v23h-23zM13 1.500v23M17 6h5" fill="none" stroke="#e2e4e7" stroke-width="2.200" stroke-linejoin="round"/></svg>
      </div>

      <div class="pane">
        <div class="addr">
          <svg class="ab"><use href="#back"/></svg><svg class="af"><use href="#fwd"/></svg><svg class="ar"><use href="#reload"/></svg>
          <div class="ain"><svg viewBox="0 0 24 24" width="24" height="24"><path d="M10 14c-2-3-1-4 1-6l4-4c4-4 9 1 6 5l-4 4M14 10c2 3 1 4-1 6l-4 4c-4 4-9-1-6-5l4-4" fill="none" stroke="#a0a3a9" stroke-width="2"/></svg><span>.replit.dev<b>/</b></span></div>
          <svg viewBox="0 0 30 28" width="30" height="28"><path d="M24 8V2H1.500v16H17M11 18v6M7 24h9M19.500 11.500h9V26h-9z" fill="none" stroke="#b4b7bd" stroke-width="2"/></svg>
          <svg viewBox="0 0 28 28" width="28" height="28"><path d="M19 2c-6-1-9 5-7 9L2 21c-2 3 2 7 5 5l10-10c5 2 10-2 9-8l-5 4-4-4z" fill="none" stroke="#b4b7bd" stroke-width="2" stroke-linejoin="round"/></svg>
          <svg viewBox="0 0 26 28" width="26" height="28"><path d="M13 5H2v21h20V14M11 16L24 3M16 2h9v9" fill="none" stroke="#b4b7bd" stroke-width="2"/></svg>
        </div>
        <div class="site-head">
          <div class="slogo"><svg width="129" height="89"><use href="#mark"/></svg><i></i></div>
          <nav><b>Inicio</b><span>Quiénes Somos</span><span>Oportunidades</span><span>Proyecciones</span><span>Contacto</span></nav>
          <span class="sbtn"><svg><use href="#search"/></svg></span>
        </div>
        <div class="hero">
          <svg class="biglogo"><use href="#mark"/></svg>
          <div class="word">Invenor<i></i></div>
          <h1 class="code"><em>&lt;</em>infraestructura que se<br>convierte<br>en<br>rentabilidad<em>/&gt;</em></h1>
          <p class="lead">Desarrollamos activos estratégicos en el norte de Chile, transformando infraestructura<br>en oportunidades de inversión sostenibles y rentables.</p>
          <span class="fab"><svg viewBox="0 0 24 24" width="46" height="46"><path d="M7.900 20A9 9 0 1 0 4 16.100L2 22z" fill="none" stroke="#fff" stroke-width="2" stroke-linejoin="round"/></svg></span>
        </div>
      </div>
    </main>
  </div>
</section>

<footer class="dock">
  <span class="app run"><svg viewBox="0 0 80 81"><g clip-path="url(#rnd)"><path fill="url(#gFinder)" d="M0 0h80v81H0z"/><path fill="url(#gFace)" d="M44 0h36v81H50c-3-10-4-20-4-32H35C35 30 38 14 44 0z"/></g><path d="M21 24v8M58 24v8" stroke="#1a2340" stroke-width="3.500"/><path d="M16 54q24 22 48 0" fill="none" stroke="#152238" stroke-width="3"/></svg></span>
  <span class="app"><svg viewBox="0 0 80 81"><rect width="80" height="81" rx="18" fill="url(#gGray)"/><circle cx="40" cy="40" r="35" fill="url(#gSafari)"/><circle cx="40" cy="40" r="31" fill="none" stroke="#cfe4fb" stroke-width="5" stroke-dasharray="1.200 2.046"/><path fill="#e0483c" d="M64 19L44 45l-8-8z"/><path fill="#f4f4f4" d="M17 60l19-23 8 8z"/></svg></span>
  <span class="app run"><svg viewBox="0 0 80 81"><rect width="80" height="81" rx="18" fill="#f4f4f2"/><circle cx="40" cy="40" r="34" fill="#4a9b4f"/><path fill="#d94b3a" d="M10 24a34 34 0 0 1 59-1H40L26 49z"/><path fill="#f3bc42" d="M40 23h29.500A34 34 0 0 1 40 74l15-26z"/><circle cx="40" cy="40" r="16.500" fill="#fff"/><circle cx="40" cy="40" r="13" fill="#3f74e6"/></svg></span>
  <span class="app run"><svg viewBox="0 0 80 81"><rect width="80" height="81" rx="18" fill="url(#gMail)"/><rect x="12" y="22" width="56" height="37" rx="4" fill="#ecebea"/><path d="M13 24l22 22q5 4 10 0l22-22M13 58l20-15M67 58L47 43" fill="none" stroke="#96989c" stroke-width="1.800"/></svg><i class="badge wide">8,848</i></span>
  <span class="app"><svg viewBox="0 0 80 81"><g clip-path="url(#rnd)"><path fill="#f7f6f5" d="M0 0h80v81H0z"/><path fill="#e2574c" d="M0 0h80v26H0z"/></g><text x="40" y="20" text-anchor="middle" class="t-bold" font-size="15" fill="#fff">SEPT</text><text x="39" y="69" text-anchor="middle" class="t-light" font-size="47" fill="#2a2a2a">16</text></svg></span>
  <span class="app run"><svg viewBox="0 0 80 81"><g clip-path="url(#rnd)"><path fill="url(#gNote)" d="M0 0h80v81H0z"/><path fill="url(#gYellow)" d="M0 0h80v21H0z"/></g><path stroke="#a9a7a3" d="M0 22h80"/><path stroke="#b5b3af" stroke-dasharray="1.500 2" stroke-width="2" d="M1 25.500h78"/><path stroke="#cfcdc9" stroke-width="1.500" d="M0 41h80M0 61h80"/></svg></span>
  <span class="app"><svg viewBox="0 0 80 81"><rect width="80" height="81" rx="18" fill="url(#gKey)"/><path fill="#f4f5f7" d="M21 11h38l4 23q0 2-2 2H19q-2 0-2-2z"/><path fill="#7d9cb8" d="M19 31h42l.5 2h-43z"/><circle cx="40" cy="20" r="7.500" fill="#e8a43e"/><path fill="#8a4fc0" d="M40 20v-7.500a7.500 7.500 0 0 0-7 9z"/><path fill="#53b556" d="M40 20l-4 6.500q6 2 10-2z"/><path fill="#4da7e8" d="M40 12.500a7.500 7.500 0 0 1 7 5L40 20z"/><path fill="#dfe3ea" d="M38.500 36h3v30h10l1 4h-25l1-4h10z"/></svg></span>
  <span class="app"><svg viewBox="0 0 80 81"><rect width="80" height="81" rx="18" fill="url(#gSet)"/><g fill="none"><circle cx="40" cy="40" r="33" stroke="#2c2d2f" stroke-width="5" stroke-dasharray="2.200 1.256"/><circle cx="40" cy="40" r="29" stroke="#303133" stroke-width="4"/><circle cx="40" cy="40" r="23" stroke="#a9abad" stroke-width="5"/><circle cx="40" cy="40" r="14" stroke="#45474a" stroke-width="12"/><path stroke="#b9bbbd" stroke-width="4" d="M40 40h22M40 40L29 20M40 40L29 60"/></g><circle cx="40" cy="40" r="4" fill="#333"/></svg><i class="badge">1</i></span>
  <span class="app run"><svg viewBox="0 0 80 81"><rect width="80" height="81" rx="18"/><circle cx="40" cy="40" r="32" fill="#65d463"/><path d="M19 30q23-7 44 5M21 42q20-5 37 5M23 53q17-4 31 4" fill="none" stroke="#000" stroke-width="6.500" stroke-linecap="round"/></svg></span>
  <span class="app"><svg viewBox="0 0 80 81"><rect width="80" height="81" rx="18" fill="#fff"/><path fill="#2258a5" d="M24 13h40v7H24z"/><path fill="#3e93e3" d="M24 20h40v46q0 1-2 1H24z"/><path fill="#2f6fc9" d="M24 20h14v14H24z"/><path fill="#65c2f6" d="M51 20h13v15H51z"/><path fill="#2a61b6" d="M24 40h40L44 55z"/><path fill="#5db4ef" d="M64 40L24 67h38q2 0 2-2z"/><rect x="7" y="25" width="30" height="31" rx="3" fill="#2862c4"/><text x="22" y="48" text-anchor="middle" class="t-bold" font-size="21" fill="#fff">O</text></svg></span>
  <span class="app run"><svg viewBox="0 0 80 81"><rect width="80" height="81" rx="18" fill="#fff"/><path fill="#57b683" d="M36 13h30v54H36z"/><path fill="#3c9160" d="M20 13h22v27H20z"/><path fill="#3a7e52" d="M36 40h30v14H36z"/><path fill="#2d5c3c" d="M20 40h22v14H20zM20 54h46v13H20z"/><path fill="#7fcda0" d="M42 13h24v13H42z"/><rect x="6" y="25" width="31" height="31" rx="3" fill="#36744b"/><text x="21.500" y="48" text-anchor="middle" class="t-bold" font-size="21" fill="#fff">X</text></svg></span>
  <span class="app run"><svg viewBox="0 0 80 81"><rect width="80" height="81" rx="18" fill="url(#gGreen)"/><path fill="none" stroke="#fff" stroke-width="5.500" d="M13 68l4-15a28 28 0 1 1 10 11z"/><path fill="#fff" d="M31 23c-8 4-5 14 4 23s19 13 24 5c2-5-8-9-9-8l-4 4c-5-2-9-7-10-10l3-4c0-2-4-11-8-10z"/></svg></span>
  <span class="app"><svg viewBox="0 0 80 81"><rect width="80" height="81" rx="18" fill="#fff"/><path fill="#5ba2ea" d="M21 13h46v14H21z"/><path fill="#3a78d2" d="M21 27h46v13H21z"/><path fill="#2a56b4" d="M21 40h46v14H21z"/><path fill="#1f3d8a" d="M21 54h46v13H21z"/><rect x="7" y="25" width="30" height="31" rx="3" fill="#2a55bc"/><text x="22" y="48" text-anchor="middle" class="t-bold" font-size="20" fill="#fff">W</text></svg></span>
  <span class="app"><svg viewBox="-2 -2 84 85"><rect x="3" y="4" width="62" height="66" rx="10" fill="#000" stroke="#fff" stroke-width="2.500" transform="rotate(-6 33 35)"/><rect x="12" y="11" width="64" height="68" rx="11" fill="#000" stroke="#fff" stroke-width="3" transform="rotate(-3 44 45)"/><rect x="19" y="27" width="51" height="44" rx="5" fill="#fff" transform="rotate(-3 44 45)"/><text x="44" y="64" text-anchor="middle" class="t-bold" font-size="40" fill="#000">31</text></svg></span>
  <span class="app"><svg viewBox="0 0 80 81"><rect width="80" height="81" rx="18" fill="#b9bab2"/><rect x="23" y="5" width="33" height="70" rx="6" fill="url(#gPhone)" stroke="#222" stroke-width="1.500"/><rect x="34" y="8" width="11" height="3.500" rx="1.700"/></svg></span>
  <span class="app"><svg viewBox="0 0 80 81"><rect width="80" height="81" rx="18" fill="#fdfdfd"/><path d="M20 81c-1-12 3-14 1-21-4-10-3-20 2-25-2-9 0-18 3-18 4 0 6 6 7 13 5-3 10-3 14 0 1-7 3-13 7-13 3 0 5 9 3 18 5 5 6 15 2 25-2 7 2 9 1 21" fill="none" stroke="#111" stroke-width="3.500"/><ellipse cx="40" cy="51" rx="9" ry="7" fill="none" stroke="#111" stroke-width="2.500"/><path d="M40 50v4M37 49h6" stroke="#111" stroke-width="2"/><circle cx="28" cy="47" r="2.500"/><circle cx="52" cy="47" r="2.500"/></svg></span>
  <span class="app"><svg viewBox="0 0 80 81"><rect x="2" y="2" width="76" height="77" rx="16" fill="#c9cfd3"/><path fill="#dfe4e7" d="M2 55l20 5 20 2 36-8v10q-2 15-16 15H18Q2 79 2 62z"/><path fill="#26282b" d="M37 21q1-2 3-2h23q3 0 3 3l-3 28q0 3-3 3l-30 2z"/><path fill="#26282b" d="M14 29q0-3 3-3h18l-6 34H17q-2 0-2-3z"/></svg></span>
  <span class="app run"><svg viewBox="0 0 80 81"><rect width="80" height="81" rx="18"/><path fill="#5c5c5c" d="M40 13l24 14v27L40 69 16 54V27z"/><path fill="#8f8f8f" d="M40 13l24 14H16z"/><path fill="#f2f2f2" d="M16 27h48L40 69V42z"/><path fill="#3c3c3c" d="M16 27l24 15v27L16 54z"/></svg></span>
  <span class="app"><svg viewBox="0 0 80 81"><rect width="80" height="81" rx="18" fill="#fff"/><path fill="#2b77bf" d="M12 31l5-4 37 29v13L12 34z"/><path fill="#2361a3" d="M12 50L54 13v14L17 54l-5-3z"/><path fill="#3a92dd" d="M53 12l14 6v44l-14 7z"/></svg></span>
  <span class="app gptapp"><svg viewBox="0 0 80 81"><rect width="80" height="81" rx="18" fill="#eef2f7"/><use href="#gpt" x="10" y="11" width="60" height="60"/></svg></span>
  <span class="app"><svg viewBox="0 0 80 81"><rect width="80" height="81" rx="18" fill="#b5b9ba"/><rect x="2" y="3" width="76" height="75" rx="16" fill="#050505"/><rect x="8" y="9" width="64" height="63" rx="9" fill="#262626"/><path d="M13 16l9 5-9 6M27 30h11" fill="none" stroke="#fff" stroke-width="3"/></svg></span>
  <span class="app"><svg viewBox="0 0 80 81"><rect width="80" height="81" rx="18" fill="url(#gPurple)"/><g color="#f1eef5"><use href="#github" x="6" y="6" width="68" height="68"/></g></svg></span>
  <span class="app run earth"><svg viewBox="-5 -6 90 94"><circle cx="40" cy="39" r="45" fill="#9aa1b0"/><g clip-path="url(#earth)" fill="none" stroke="#e9eaec" stroke-width="13"><path d="M15 0c10 20 20 18 40 30s30 20 35 45M-5 30c20 0 30 16 45 22s25 10 30 30M60-6l30 26M-8 60q20 4 34 26"/></g><rect x="15" y="67" width="50" height="26" rx="4" fill="#2f3136" opacity=".92"/><text x="40" y="87" text-anchor="middle" class="t-reg" font-size="21" fill="#fff">Pro</text></svg></span>
  <span class="app"><svg viewBox="0 0 80 81"><rect width="80" height="81" rx="18" fill="url(#gGreen)"/><path fill="url(#gBubble)" d="M40 14c17 0 29 11 29 25S57 64 40 64c-4 0-7 0-9-1-2 3-6 4-9 4 2-2 4-5 3-8-9-5-14-12-14-20 0-14 12-25 29-25z"/></svg></span>
  <span class="app"><svg viewBox="0 0 80 81"><rect width="80" height="81" rx="18" fill="#fff"/><path fill="url(#gBlue)" d="M40 16l22 19q2 2 2 5v21q0 2-2 2H50V45q0-10-10-10T30 45v18H18q-2 0-2-2V40q0-3 2-5z"/></svg></span>
  <i class="dsep"></i>
  <span class="app"><svg viewBox="0 0 80 81"><rect width="80" height="81" rx="18" fill="#a32116"/><path d="M17 60c6-8 22-16 38-17 12 0 12 7 4 6-12-2-22-16-24-28 0-8 6-8 6-1 0 14-8 32-16 42-5 5-11 3-8-2z" fill="none" stroke="#fff" stroke-width="3.500"/></svg></span>
  <span class="app"><svg viewBox="0 0 80 81"><rect width="80" height="81" rx="18" fill="#ececec"/><rect x="6" y="6" width="68" height="70" rx="10" fill="#9db9ea"/><path fill="#2c3f85" d="M6 43h68v9H6z"/><path fill="#7ba0b8" d="M6 50h68v16q0 10-10 10H16Q6 76 6 66z"/><path fill="#e3e8ea" d="M10 66l8-8 6 6 6-8 4 14-12 4zM34 56l6-3 1 9z"/><rect x="41" y="40" width="35" height="17" rx="3" fill="#17181a"/><path fill="#c6cdd0" stroke="#8b9295" d="M44 57h29l7 22q0 6-6 6H43q-6 0-6-6z"/><path fill="#6f8796" d="M45 66l8-6 7 7 8-4 4 12-12 4-8-6-8 4z"/></svg></span>
  <i class="dsep"></i>
  <span class="app pdf"><svg viewBox="0 0 82 95"><path fill="#eaeaea" d="M16 0h36l8 12v10H16z"/><path fill="#83b1dc" d="M0 11h60l22 23v61H0z"/><path fill="#fff" d="M58 11l24 23H60z"/><path fill="#e6e8ea" d="M4 28h52v8h22v14H4zM4 57h74v18H4z"/><path stroke="#9aa" stroke-width="1.500" d="M8 33h40M8 38h60M8 43h60M8 62h66M8 67h66"/><text x="41" y="90" text-anchor="middle" class="t-bold" font-size="12" fill="#fff">PDF</text></svg></span>
  <span class="app trash"><svg viewBox="0 0 72 88"><path fill="url(#gTrash)" d="M1 10l10 70q1 8 25 8t25-8l10-70z"/><ellipse cx="36" cy="10" rx="35" ry="9" fill="#4c5046" stroke="#8d9290" stroke-width="2"/></svg></span>
</footer>
</body>
</html>
```
FILE: styles.css
```css
* { box-sizing: border-box; }
body {
  margin: 0; width: 3420px; height: 2214px; overflow: hidden; position: relative;
  font-family: Inter, "Liberation Sans", sans-serif;
  background: linear-gradient(#7c9ad0 0 300px, transparent 300px),
    linear-gradient(90deg, #2a3012 0%, #353f12 40%, #48551a 75%, #66782a 100%);
}
i { font-style: normal; }
svg { display: block; flex: none; }
.defs { position: absolute; width: 0; height: 0; }
.sprite { display: none; }
.t-bold { font-family: Inter, sans-serif; font-weight: 700; }
.t-df { font-family: "Liberation Sans", sans-serif; font-weight: 700; letter-spacing: -1px; }
.t-reg { font-family: Inter, sans-serif; font-weight: 400; }
.t-light { font-family: Inter, sans-serif; font-weight: 300; }
.t-serif { font-family: "Liberation Serif", serif; font-weight: 700; }
.t-serif-r { font-family: "Liberation Serif", serif; }
.grow { flex: 1; }
.grass { position: absolute; left: 0; top: 2014px; }

/* menu bar */
.menubar {
  position: relative; height: 76px; display: flex; align-items: center; color: #fff;
  padding: 0 34px 3px 38px; background: linear-gradient(90deg, #4968a0, #5473aa 50%, #6482b4);
  font-size: 26px; font-weight: 500;
}
.m-apple { width: 33px; height: 33px; margin-right: 37px; }
.menus { display: grid; grid-template-columns: 143px 131px 130px 199px 140px 149px 133px 137px 140px 90px; letter-spacing: -.025em; }
.menus b { font-weight: 700; letter-spacing: 0; }
.status { display: grid; grid-template-columns: 67px 80px 59px 68px 66px 91px 73px 66px 66px 232px; align-items: center; margin-left: auto; }
.status .pct { font-size: 23px; letter-spacing: -.03em; }
.clock { white-space: nowrap; letter-spacing: .002em; }
.s26 { width: 27px; height: 27px; }
.s22 { width: 24px; height: 24px; }
.drive { position: absolute; left: 3243px; top: 98px; }

/* windows */
.win { position: absolute; }
.excel {
  left: 3px; top: 77px; width: 3181px; height: 60px; background: #1a1a1a; border: 2px solid #606163;
  border-bottom: 0; border-radius: 24px 24px 0 0; color: #5e5e5e; font-size: 24px;
  display: flex; align-items: flex-start; padding: 13px 22px 0 24px; overflow: hidden; outline: 1px solid #000;
}
.xlights { display: flex; gap: 16px; padding-top: 4px; width: 157px; }
.xlights i { width: 24px; height: 24px; border-radius: 50%; background: #353535; }
.xauto { width: 172px; line-height: 34px; letter-spacing: -.02em; }
.xtoggle { width: 26px; height: 26px; border-radius: 50%; background: #575757; margin: 4px 53px 0 4px; }
.xtitle { display: flex; gap: 11px; margin-left: 720px; color: #b4b4b4; line-height: 34px; letter-spacing: -.03em; }
.xsearch { display: flex; gap: 30px; margin-left: auto; width: 558px; height: 60px; margin-top: -5px; border: 2px solid #2c2c2c; border-radius: 8px; padding: 8px 12px; line-height: 28px; color: #444; }
.xshare { margin-left: 35px; }
.shadowwin { left: 28px; top: 111px; width: 3389px; height: 60px; background: #28292b; border: 2px solid #5f6062; border-radius: 24px 24px 0 0; outline: 1px solid #000; }
.chrome { left: 0; top: 119px; width: 3420px; height: 1945px; border-radius: 26px 26px 22px 22px; background: #d2e8c2; overflow: hidden; display: flex; flex-direction: column; box-shadow: 0 0 0 1px #000; }

/* tab strip */
.tabstrip { height: 81px; flex: none; display: flex; align-items: center; padding: 2px 13px 0 42px; }
.lights { display: flex; gap: 16px; width: 137px; }
.lights i { width: 24px; height: 24px; border-radius: 50%; }
.lights .r { background: #ec6a5e; } .lights .y { background: #f4bf4f; } .lights .g { background: #61c554; }
.tabs { display: flex; height: 80px; }
.tabs span { position: relative; width: 74px; display: flex; align-items: center; justify-content: center; color: #202124; }
.tabs span::after { content: ""; position: absolute; right: -2px; top: 24px; width: 4px; height: 32px; border-radius: 2px; background: #fff; }
.tabs .n { width: 72px; }
.tabs .last::after, .tabs .active::after, .tabs .newtab::after { display: none; }
.tabs svg { width: 30px; height: 28px; margin-top: -1px; }
.tabs .w { color: #fff; }
.tabs .d { width: 40px; height: 40px; }
.tabs .b { width: 32px; height: 32px; }
.tabs .active svg { width: 22px; height: 22px; --w: 3; z-index: 1; }
.tabs .active::before { content: ""; position: absolute; left: 5px; right: 5px; top: 12px; bottom: 0; background: #fff; border-radius: 20px 20px 0 0; }
.tabs .newtab svg { width: 24px; height: 24px; --w: 3.2; }
.tabmenu { margin-left: auto; width: 56px; height: 56px; border-radius: 20px; background: #fff; display: flex; align-items: center; justify-content: center; color: #202124; }
.tabmenu svg { width: 20px; height: 20px; --w: 3.4; }

/* toolbar */
.toolbar { height: 92px; flex: none; display: flex; align-items: center; background: #fff; border-radius: 26px 26px 0 0; padding: 0 13px 0 30px; color: #202124; }
.navbtns { display: grid; grid-template-columns: 73px 71px 67px; }
.navbtns svg { width: 27px; height: 27px; --w: 2.7; }
.navbtns .off { color: #9a9da1; }
.omni { width: 2517px; height: 68px; border-radius: 34px; background: #e1e1e1; display: flex; align-items: center; padding: 0 32px 0 8px; gap: 32px; }
.site { width: 48px; height: 48px; border-radius: 50%; background: #fff; display: flex; align-items: center; justify-content: center; margin-right: -15px; }
.url { flex: 1; font-size: 28px; color: #5f6368; letter-spacing: -.006em; }
.url b { font-weight: 400; color: #202124; }
.puz { margin: -4px 34px 0 36px; }
.tsep { width: 4px; height: 32px; background: #cfe6bf; border-radius: 2px; }
.dl { margin: 0 35px 0 35px; }
.restart { margin-left: auto; width: 372px; height: 68px; border-radius: 34px; background: #d2e8c2; padding: 0 28px 0 23px; display: flex; align-items: center; justify-content: space-between; font-size: 26px; font-weight: 500; letter-spacing: -.0100em; white-space: nowrap; color: #262d22; }
.kebab { display: grid; gap: 5px; }
.kebab i { width: 6px; height: 6px; border-radius: 50%; background: #202124; }

/* bookmarks */
.bookmarks {
  height: 69px; flex: none; background: #fff; display: grid; align-items: center; padding: 0 0 14px 26px; color: #202124;
  grid-template-columns: 91px 109px 89px 113px 135px 157px 91px 117px 108px 120px 109px 128px 125px 130px 125px 157px 93px 142px 147px 164px 156px 149px 194px 364px 60px;
  font-size: 24px; font-weight: 500; letter-spacing: -.012em;
}
.bookmarks span { display: flex; align-items: center; gap: 12px; white-space: nowrap; }
.bookmarks span svg { width: 31px; height: 31px; }
.bookmarks .gg { padding: 1px; }
.bookmarks .apps svg { width: 28px; height: 28px; }
.apps i { width: 3px; height: 32px; background: #cfe6bf; margin-left: 18px; }
.bookmarks .more { font-size: 36px; margin-top: -6px; }

/* workspace */
.replit { flex: 1; background: #1b1d24; display: flex; font-family: Roboto, "Liberation Sans", sans-serif; font-size: 28px; color: #e9eaec; border: 2px solid #4a4d52; border-top-color: #c4cfc0; border-radius: 0 0 22px 22px; }
.side { width: 922px; display: flex; flex-direction: column; padding-left: 11px; }
.side > * { flex-shrink: 0; }
.side p { margin: 0; }
.top { height: 75px; display: flex; align-items: center; padding-left: 20px; margin-top: 1px; }
.rlogo { margin-top: -5px; }
.chev { width: 18px; height: 18px; margin: 3px 0 0 10px; --w: 2.4; }
.rapp { margin: 0 14px 0 30px; }
.top b { font-weight: 400; letter-spacing: .0190em; width: 236px; color: #f0f1f3; }
.chip { width: 25px; height: 25px; border-radius: 5px; background: #a2a5b0; border: 3px solid #7257f0; box-shadow: inset 0 0 0 1px #1b1d24; }
.thread { height: 75px; display: flex; align-items: center; padding: 2px 0 0 15px; }
.title { margin-left: 78px; width: 544px; white-space: nowrap; letter-spacing: .0020em; color: #f0f1f3; }
.agent { width: 135px; height: 48px; border-radius: 24px; background: #38251a; color: #ffb868; font-size: 24px; display: flex; align-items: center; gap: 6px; padding-left: 10px; }
.newchat { margin-left: 50px; }
.msg { margin-left: 83px; width: 800px; background: #25477a; line-height: 45px; padding: 8px 16px; color: #eceef1; white-space: nowrap; }
.first { height: 110px; border-radius: 0 0 8px 8px; }
.second { height: 190px; border-radius: 8px; margin-top: 73px; padding-top: 12px; display: flex; flex-direction: column; gap: 32px; }
.second .wide { letter-spacing: .0085em; }
.time { margin: 11px 28px 0 0; text-align: right; font-size: 24px; line-height: 40px; color: #a4a7ad; }
.sum { margin: 46px 42px 0 25px; height: 40px; display: flex; align-items: center; justify-content: space-between; font-size: 24px; color: #c8cacf; }
.sum svg { width: 22px; height: 22px; --w: 2; }
.sumtext { margin: 6px 0 0 25px; line-height: 45px; color: #a0a3a9; letter-spacing: .0025em; white-space: nowrap; }
.act { height: 45px; display: flex; align-items: center; color: #c2c5ca; padding-left: 17px; white-space: nowrap; letter-spacing: .002em; }
.act.wide { letter-spacing: .0096em; }
.act svg { width: 32px; margin-right: 12px; color: #a6a9b0; }
.act code { font-family: "DejaVu Sans Mono", monospace; font-size: 26px; letter-spacing: 0; }
.a1 { margin-top: 39px; }
.a2 { margin-top: 18px; } .a2 svg { height: 31px; }
.a3 { margin-top: 29px; } .a4 { margin-top: 28px; }
.a5 { margin-top: 19px; letter-spacing: -.0033em; } .a5 svg { margin-right: 10px; }
.dim { color: #9a9da4; }
.say { padding-left: 19px; line-height: 45.500px; letter-spacing: .0033em; white-space: nowrap; color: #f0f1f3; }
.tight { letter-spacing: 0; }
.a2 + .say { margin-top: 29px; }
.work { margin: 29px 45px 0 19px; height: 40px; display: flex; justify-content: space-between; align-items: center; font-size: 24px; color: #a99df8; }
.stop { display: flex; align-items: center; gap: 11px; color: #d0d2d6; }
.stop i { width: 18px; height: 18px; border: 2px solid #b0b3b9; border-radius: 3px; }
.prompt { margin-top: 43px; width: 900px; height: 150px; border: 2px solid #3c3f49; border-radius: 12px; background: #21242d; padding: 18px 26px 0 12px; }
.ph { display: block; line-height: 44px; color: #a0a3a9; padding-left: 7px; letter-spacing: .0066em; }
.ptools { display: flex; align-items: center; height: 48px; margin-top: 24px; }
.build { width: 160px; height: 46px; background: #2a2d36; border-radius: 8px; display: flex; align-items: center; gap: 11px; padding: 0 12px 0 11px; font-size: 25px; margin: 0 17px 0 0; color: #f0f1f3; }
.bc { width: 16px; height: 16px; margin-left: auto; --w: 2.600; }
.clip { margin-left: 28px; }
.send { width: 26px; height: 26px; margin-left: 37px; color: #b4b7bd; }

.main { width: 2486px; display: flex; flex-direction: column; }
.rtabs { height: 79px; display: flex; align-items: center; padding: 0 17px 4px 0; margin-top: 1px; }
.rt { width: 320px; height: 56px; border-radius: 10px; display: flex; align-items: center; gap: 14px; padding: 0 18px 0 13px; margin-right: 8px; color: #a9acb2; letter-spacing: -.01em; }
.rt.on { background: #22252e; color: #f4f5f6; letter-spacing: .004em; }
.cx { width: 20px; height: 20px; margin-left: auto; color: #60636b; --w: 2; }
.radd { width: 25px; height: 25px; margin-left: 15px; color: #b4b7bd; --w: 2; }
.rs { width: 27px; height: 27px; color: #e2e4e7; }
.inv { margin: 0 20px 0 34px; }
.repub { width: 175px; height: 56px; background: #22252e; border-radius: 10px 0 0 10px; display: flex; align-items: center; gap: 9px; padding-left: 21px; font-size: 24px; font-weight: 500; }
.copy { width: 44px; height: 56px; margin-left: 3px; background: #22252e; border-radius: 0 10px 10px 0; display: flex; align-items: center; justify-content: center; }
.lay { margin-left: 23px; }
.pane { position: relative; width: 2485px; height: 1610px; border: 2px solid #6a57dc; border-radius: 12px; overflow: hidden; background: #111628; display: flex; flex-direction: column; }
.addr { height: 70px; flex: none; display: flex; align-items: center; background: #1b1d24; padding: 0 18px 2px 17px; }
.ab, .af { width: 24px; height: 24px; color: #a9acb2; --w: 2.100; }
.af { margin-left: 33px; }
.ar { width: 30px; height: 30px; margin: 0 15px 0 30px; color: #f0f1f3; --w: 1.900; }
.ain { width: 2140px; height: 49px; border-radius: 8px; background: #22252e; display: flex; align-items: center; gap: 4px; padding-left: 8px; color: #a0a3a9; margin-right: 18px; font-size: 27px; }
.ain b { color: #e9eaec; font-weight: 400; padding-left: 1px; }
.addr > svg:nth-last-child(-n+2) { margin-left: 24px; }
.addr > svg:last-child { margin-left: 23px; }

/* previewed site */
.site-head { height: 129px; flex: none; border-bottom: 2px solid #374151; display: flex; align-items: center; padding: 0 63px 0 70px; font-family: Inter, sans-serif; }
.slogo { position: relative; margin-top: -2px; width: 648px; }
.slogo i { position: absolute; left: 95px; top: 44px; width: 12px; height: 12px; border-radius: 50%; background: #fff; }
.site-head nav { display: grid; grid-template-columns: 144px 291px 280px 259px 140px; font-size: 32px; letter-spacing: -.025em; color: #ced3dc; }
.site-head nav b { font-weight: 600; color: #63cf97; }
.sbtn { margin-left: auto; width: 75px; height: 76px; border: 2px solid #323b4c; border-radius: 16px; background: #1c2433; display: flex; align-items: center; justify-content: center; color: #dfe3ea; }
.sbtn svg { width: 27px; height: 27px; --w: 2.300; }
.hero { flex: 1; display: flex; flex-direction: column; align-items: flex-start; font-family: Inter, sans-serif; }
.biglogo { width: 360px; height: 246px; margin: 28px 0 0 1063px; }
.word { margin: 14px 0 0 964px; font-size: 133px; font-weight: 800; letter-spacing: -.0380em; line-height: 120px; color: #fff; display: flex; align-items: flex-end; }
.word i { width: 27px; height: 27px; border-radius: 50%; background: #56b788; margin: 0 0 9px 3px; }
.code { margin: 56px 0 0 177px; width: 2126px; height: 676px; border: 2px solid #2b3545; border-radius: 26px; background: #1d2636; box-shadow: 0 50px 100px -24px rgba(0, 0, 0, .5); padding: 48px 64px; font: 700 144px/144px "DejaVu Sans Mono", monospace; color: #fff; white-space: nowrap; }
.code em { font-style: normal; color: #6ea2f5; }
.lead { margin: 65px 0 0; width: 2480px; text-align: center; font-size: 46px; line-height: 64px; letter-spacing: -.0298em; color: #c8ced9; }
.fab { position: absolute; left: 2322px; top: 1447px; width: 112px; height: 112px; border-radius: 50%; background: #54b685; display: flex; align-items: center; justify-content: center; box-shadow: 0 12px 30px rgba(0, 0, 0, .35); }

/* dock */
.dock { position: absolute; left: 91px; top: 2074px; width: 3238px; height: 130px; border: 2px solid rgba(120, 122, 95, .65); border-radius: 42px; background: linear-gradient(90deg, #2d2f1a, #31361a 45%, #42481c); display: flex; padding: 17px 0 0 17px; }
.app { position: relative; width: 80px; height: 82px; margin-right: 28px; flex: none; }
.app > svg { width: 80px; height: 82px; overflow: visible; }
.run::after { content: ""; position: absolute; left: 37px; top: 99px; width: 7px; height: 8px; border-radius: 50%; background: #b1b494; }
.badge { position: absolute; left: 54px; top: -11px; width: 40px; height: 40px; border-radius: 20px; background: #df4b3d; color: #fff; font-size: 24px; line-height: 40px; text-align: center; letter-spacing: -.03em; }
.badge.wide { left: 30px; width: 64px; font-size: 22px; }
.gptapp { color: #23282f; }
.earth > svg { width: 90px; height: 94px; margin: -6px 0 0 -5px; }
.dsep { flex: none; width: 2px; height: 94px; background: #74784f; margin: -1px 34px 0 11px; }
.pdf > svg { width: 82px; height: 95px; margin-top: -7px; }
.trash { margin-left: 4px; }
.trash > svg { width: 72px; height: 88px; margin-top: -3px; }
```
